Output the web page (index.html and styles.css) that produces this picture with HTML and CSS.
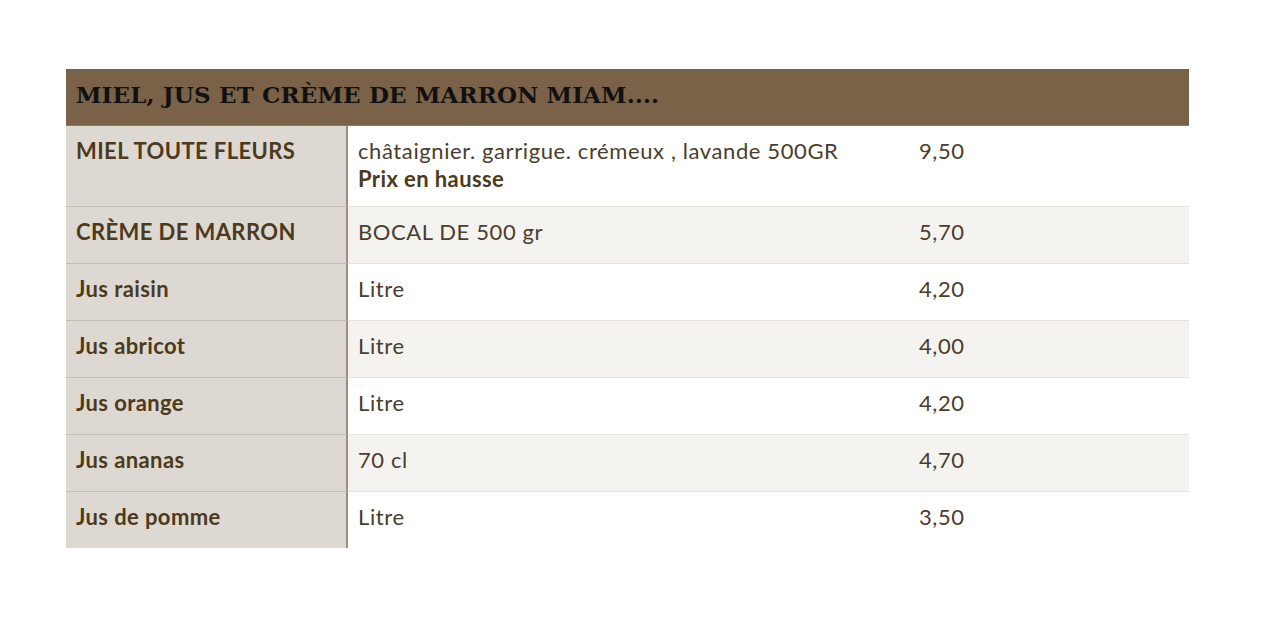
FILE: index.html
```html
<!DOCTYPE html>
<html lang="fr">
<head>
<meta charset="utf-8">
<link rel="stylesheet" href="styles.css">
</head>
<body>
<div class="page">
  <div class="menu">
    <div class="menu-head">MIEL, JUS ET CRÈME DE MARRON MIAM....</div>
    <div class="row row-odd row-tall">
      <div class="name">MIEL TOUTE FLEURS</div>
      <div class="desc">châtaignier. garrigue. crémeux , lavande 500GR<br><strong>Prix en hausse</strong></div>
      <div class="price">9,50</div>
    </div>
    <div class="row row-even">
      <div class="name">CRÈME DE MARRON</div>
      <div class="desc">BOCAL DE 500 gr</div>
      <div class="price">5,70</div>
    </div>
    <div class="row row-odd">
      <div class="name">Jus raisin</div>
      <div class="desc">Litre</div>
      <div class="price">4,20</div>
    </div>
    <div class="row row-even">
      <div class="name">Jus abricot</div>
      <div class="desc">Litre</div>
      <div class="price">4,00</div>
    </div>
    <div class="row row-odd">
      <div class="name">Jus orange</div>
      <div class="desc">Litre</div>
      <div class="price">4,20</div>
    </div>
    <div class="row row-even">
      <div class="name">Jus ananas</div>
      <div class="desc">70 cl</div>
      <div class="price">4,70</div>
    </div>
    <div class="row row-odd row-last">
      <div class="name">Jus de pomme</div>
      <div class="desc">Litre</div>
      <div class="price">3,50</div>
    </div>
  </div>
</div>
</body>
</html>
```
FILE: styles.css
```css
html, body {
  margin: 0;
  padding: 0;
  background: #ffffff;
}
.page {
  padding: 69px 91px 0 66px;
}
.menu {
  width: 1123px;
  font-family: Lato, "Open Sans", sans-serif;
  font-size: 22px;
  color: #4a3d2c;
}
.menu-head {
  height: 57px;
  box-sizing: border-box;
  background: #7a6248;
  border-bottom: 1px solid #8c7a66;
  padding: 12px 0 0 10px;
  font-family: "DejaVu Serif", "Liberation Serif", serif;
  font-weight: bold;
  font-size: 23px;
  letter-spacing: 0.15px;
  color: #111;
}
.row {
  display: grid;
  grid-template-columns: 282px 571px 1fr;
  height: 57px;
  box-sizing: border-box;
  border-bottom: 1px solid #e6e2dc;
}
.row-tall {
  height: 81px;
}
.row-last {
  border-bottom: none;
  height: 56px;
}
.row-odd { background: #ffffff; }
.row-even { background: #f5f3f0; }
.name {
  background: #ddd8d1;
  border-right: 2px solid #9c8f80;
  border-bottom: 1px solid #c6beb3;
  margin-bottom: -1px;
  padding: 11px 10px 0 10px;
  font-weight: bold;
  font-size: 22px;
  letter-spacing: 0.4px;
  color: #4d3a1c;
  line-height: 28px;
}
.row-last .name {
  margin-bottom: 0;
  border-bottom: none;
}
.desc {
  padding: 11px 10px 0 10px;
  line-height: 28px;
  letter-spacing: 0.6px;
}
.desc strong {
  color: #4d3a1c;
  font-weight: bold;
  letter-spacing: 0.4px;
}
.price {
  padding: 11px 0 0 0;
  line-height: 28px;
  letter-spacing: 0.6px;
}
```
